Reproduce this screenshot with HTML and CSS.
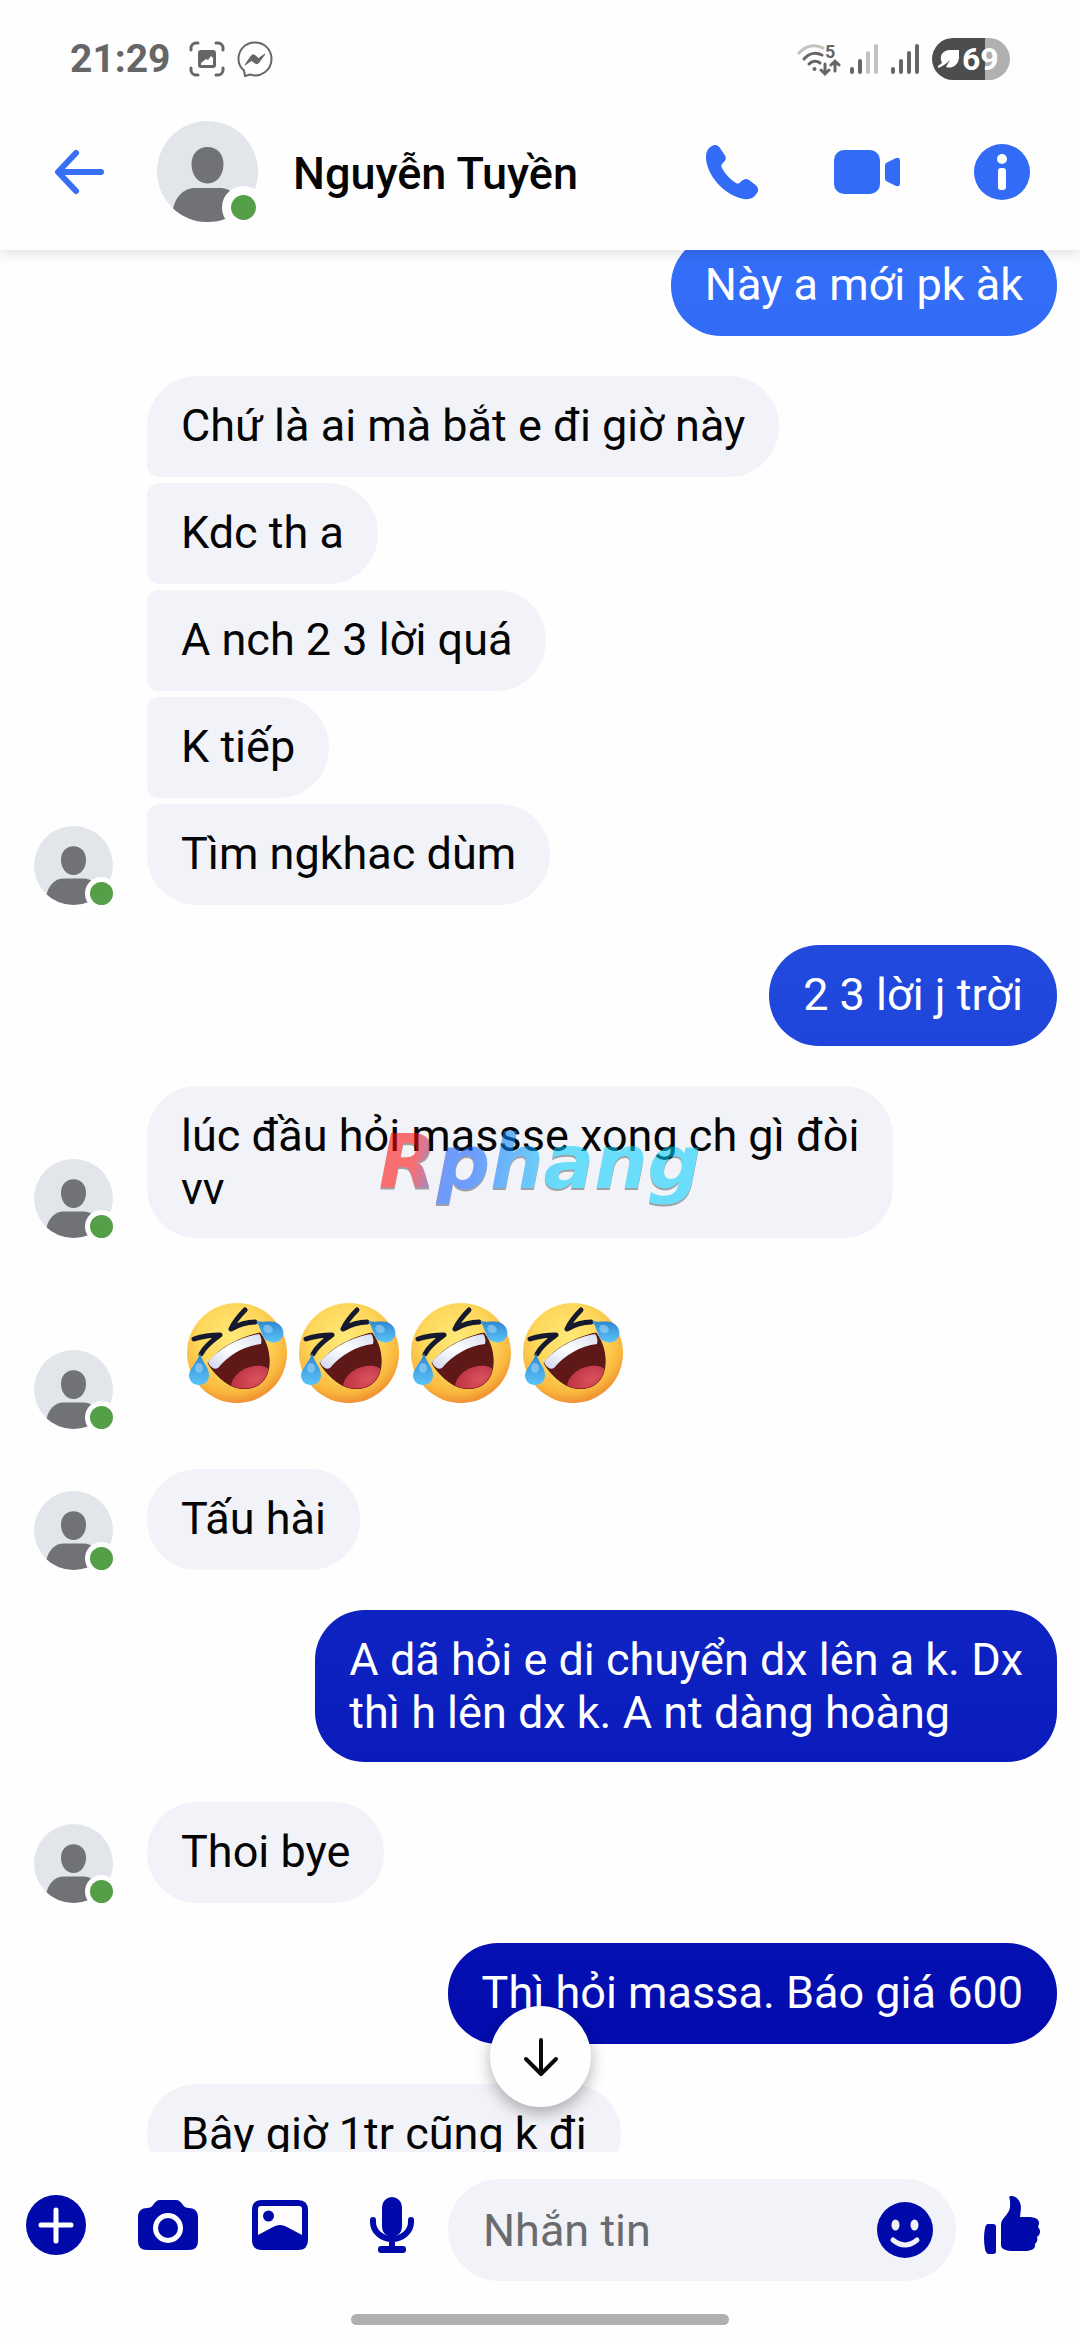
FILE: index.html
```html
<!DOCTYPE html>
<html lang="vi">
<head>
<meta charset="utf-8">
<meta name="viewport" content="width=device-width, initial-scale=1">
<title>Nguyễn Tuyền</title>
<link rel="stylesheet" href="styles.css">
</head>
<body>
<svg class="sprite" aria-hidden="true">
  <defs>
    <radialGradient id="face" cx="45%" cy="35%" r="68%">
      <stop offset="0" stop-color="#ffe97a"/>
      <stop offset="0.5" stop-color="#fdd75a"/>
      <stop offset="0.8" stop-color="#f9b83e"/>
      <stop offset="1" stop-color="#ee862f"/>
    </radialGradient>
    <linearGradient id="tear" x1="0" y1="0" x2="0" y2="1">
      <stop offset="0" stop-color="#2f86cd"/>
      <stop offset="1" stop-color="#5cc3fb"/>
    </linearGradient>
    <linearGradient id="teeth" x1="0" y1="1" x2="1" y2="0">
      <stop offset="0" stop-color="#cdd5ec"/>
      <stop offset="0.5" stop-color="#ffffff"/>
      <stop offset="1" stop-color="#d8def0"/>
    </linearGradient>
    <radialGradient id="tongue" cx="60%" cy="45%" r="60%">
      <stop offset="0" stop-color="#d9525f"/>
      <stop offset="1" stop-color="#bd3040"/>
    </radialGradient>
    <clipPath id="disc"><circle cx="50.500" cy="50.500" r="50.500"/></clipPath>
    <clipPath id="mouth-clip"><path d="M21 60C31 45 54 34 73 30C83 43 85 64 78 75C71 87 54 88 43 82C34 77 26 69 21 60Z"/></clipPath>
  </defs>
  <symbol id="person" viewBox="0 0 101 101">
    <g clip-path="url(#disc)">
      <rect width="101" height="101" fill="#e2e5ea"/>
      <path d="M50.500 26C60 26 66.500 33 66.500 43C66.500 54 60 62.500 50.500 62.500S34.500 54 34.500 43C34.500 33 41 26 50.500 26Z" fill="#717276"/>
      <path d="M38 67H63C75 67 83 77 85 88L85 101H16V88C18 77 26 67 38 67Z" fill="#717276"/>
    </g>
  </symbol>
  <symbol id="rofl" viewBox="0 0 100 100">
    <circle cx="50" cy="50" r="50" fill="url(#face)"/>
    <path d="M21 60C31 45 54 34 73 30C83 43 85 64 78 75C71 87 54 88 43 82C34 77 26 69 21 60Z" fill="#5f1818" stroke="#4a1413" stroke-width="1"/>
    <g clip-path="url(#mouth-clip)">
      <ellipse cx="65" cy="79" rx="22" ry="15" transform="rotate(-24 65 79)" fill="url(#tongue)"/>
    </g>
    <path d="M21 59C32 45 53 34 72 31C74 33 75 37 74 41C57 43 42 52 31 65C27 67 23 64 21 59Z" fill="url(#teeth)"/>
    <path d="M7 36C16 33 24 32 33 32C26 37 18 43 14 51" fill="none" stroke="#15192f" stroke-width="5" stroke-linecap="round" stroke-linejoin="round"/>
    <path d="M58 7C52 13 47 19 44 26C51 22 60 19 68 19" fill="none" stroke="#15192f" stroke-width="5" stroke-linecap="round" stroke-linejoin="round"/>
    <path d="M13 50C15 59 22 64 22 72C22 78 18 82 12 82S2 78 2 72C3 64 11 59 13 50Z" fill="url(#tear)"/>
    <ellipse cx="12" cy="65" rx="4" ry="5" fill="#8fcff6" opacity="0.700"/>
    <path d="M69 18C77 20 84 17 90 20C96 23 98 30 95 35C92 40 84 41 79 37C74 33 74 24 69 18Z" fill="url(#tear)"/>
    <ellipse cx="81" cy="26" rx="5" ry="4" transform="rotate(30 81 26)" fill="#8fcff6" opacity="0.700"/>
  </symbol>
</svg>

<div class="app">
  <header class="top">
    <div class="status">
      <div class="status__side">
        <time class="status__time">21:29</time>
        <svg class="status__notice" viewBox="0 0 36 36" aria-hidden="true">
          <path d="M2 9V7A5 5 0 0 1 7 2H9M27 2H29A5 5 0 0 1 34 7V9M34 27V29A5 5 0 0 1 29 34H27M9 34H7A5 5 0 0 1 2 29V27" fill="none" stroke="#666" stroke-width="3" stroke-linecap="round"/>
          <path fill-rule="evenodd" fill="#666" d="M12 9H24Q27 9 27 12V24Q27 27 24 27H12Q9 27 9 24V12Q9 9 12 9ZM12 24H24V17L22 15L19 19L17 18L12 22Z"/>
        </svg>
        <svg class="status__notice" viewBox="0 0 36 36" aria-hidden="true">
          <path d="M18 1.500C8 1.500 1.500 9 1.500 18C1.500 23 4 27 7 29.500L8 35L13 33.500C24 37 34.500 29 34.500 18C34.500 9 28 1.500 18 1.500Z" fill="none" stroke="#666" stroke-width="2"/>
          <path d="M8 24L14.500 14.500Q16 13 18 14.500L21.500 17.500L28 13L21.500 22Q20 23.500 18 22L14.500 19.500Z" fill="#666" stroke="#666" stroke-linejoin="round"/>
        </svg>
      </div>
      <div class="status__side status__side--end">
        <svg class="status__wifi" viewBox="0 0 44 36" aria-hidden="true">
          <g fill="none" stroke-width="3" stroke-linecap="round">
            <path d="M2 12C9 4 19 3 26 7" stroke="#c2c2c2"/>
            <path d="M7 18C12 12 19 11 25 14M12 23C15 19.500 20 19.500 23 22" stroke="#666"/>
            <path d="M28 23V32M24 29L28 33L32 29M38 30V20M34 24L38 20L42 24" stroke="#666"/>
          </g>
          <circle cx="17.500" cy="28" r="2" fill="#666"/>
          <text x="28" y="17" class="status__band">5</text>
        </svg>
        <svg class="status__signal" viewBox="0 0 28 30" aria-hidden="true">
          <path d="M2 25V28M10 17V28" class="bar"/>
          <path d="M18 9V28M26 2V28" class="bar bar--off"/>
        </svg>
        <svg class="status__signal" viewBox="0 0 28 30" aria-hidden="true">
          <path d="M2 25V28M10 17V28M18 9V28M26 2V28" class="bar"/>
        </svg>
        <span class="battery">
          <svg viewBox="0 0 24 24" aria-hidden="true"><path d="M1 21C4 20 8 18 13 13L9 20C14 22 21 19 22 11V3H12C5 4 2 9 5 16L1 19Z" fill="#fff"/></svg>
          <span>69</span>
        </span>
      </div>
    </div>

    <div class="header">
      <button class="icon-btn icon-btn--back" type="button" aria-label="Quay lại">
        <svg width="50" height="46" viewBox="0 0 50 46"><path d="M47 23H6M22 4L4 23L22 42" fill="none" stroke="#376ff5" stroke-width="6" stroke-linecap="round" stroke-linejoin="round"/></svg>
      </button>
      <span class="avatar avatar--large">
        <svg class="avatar__img"><use href="#person"/></svg>
        <span class="avatar__dot"></span>
      </span>
      <h1 class="header__name">Nguyễn Tuyền</h1>
      <div class="header__actions">
        <button class="icon-btn" type="button" aria-label="Gọi thoại">
          <svg width="54" height="56" viewBox="0 0 54 56"><path d="M8 1.500C11 .5 13 1.500 15 4L20 11.500C22 15 20 17 17.500 19.500C16 21 16 22 17 24C20 30 26 36 31 39C33 40 34 39.500 35 38.500C38 35.500 41 34 44 36L50 40.500C53.500 43.500 54 46 52 49C49 54 45 56 39 55C20 52 1 31 1 13C1 7 4 3 8 1.500Z" fill="#326bf6"/></svg>
        </button>
        <button class="icon-btn" type="button" aria-label="Gọi video">
          <svg width="66" height="44" viewBox="0 0 66 44"><rect width="46" height="44" rx="10" fill="#326bf6"/><path d="M52 13Q51 14 51 16V28Q51 30 52 31L62 36Q66 37 66 33V11Q66 7 62 8Z" fill="#326bf6"/></svg>
        </button>
        <button class="icon-btn" type="button" aria-label="Thông tin">
          <svg width="56" height="56" viewBox="0 0 56 56"><circle cx="28" cy="28" r="28" fill="#326bf6"/><circle cx="28" cy="15" r="5" fill="#fff"/><rect x="24" y="24" width="8" height="22" rx="3" fill="#fff"/></svg>
        </button>
      </div>
    </div>
  </header>

  <main class="feed">
    <div class="thread">
      <div class="sent"><p class="bubble bubble--sent">Này a mới pk àk</p></div>
      <div class="received">
        <span class="avatar"><svg class="avatar__img"><use href="#person"/></svg><span class="avatar__dot"></span></span>
        <div class="received__group">
          <p class="bubble">Chứ là ai mà bắt e đi giờ này</p>
          <p class="bubble">Kdc th a</p>
          <p class="bubble">A nch 2 3 lời quá</p>
          <p class="bubble">K tiếp</p>
          <p class="bubble">Tìm ngkhac dùm</p>
        </div>
      </div>
      <div class="sent"><p class="bubble bubble--sent">2 3 lời j trời</p></div>
      <div class="received">
        <span class="avatar"><svg class="avatar__img"><use href="#person"/></svg><span class="avatar__dot"></span></span>
        <div class="received__group"><p class="bubble bubble--lines">lúc đầu hỏi massse xong ch gì đòi<br>vv</p></div>
      </div>
      <div class="received">
        <span class="avatar"><svg class="avatar__img"><use href="#person"/></svg><span class="avatar__dot"></span></span>
        <div class="emojis" role="img" aria-label="🤣🤣🤣🤣">
          <svg><use href="#rofl"/></svg>
          <svg><use href="#rofl"/></svg>
          <svg><use href="#rofl"/></svg>
          <svg><use href="#rofl"/></svg>
        </div>
      </div>
      <div class="received">
        <span class="avatar"><svg class="avatar__img"><use href="#person"/></svg><span class="avatar__dot"></span></span>
        <div class="received__group"><p class="bubble">Tấu hài</p></div>
      </div>
      <div class="sent"><p class="bubble bubble--sent bubble--lines">A dã hỏi e di chuyển dx lên a k. Dx<br>thì h lên dx k. A nt dàng hoàng</p></div>
      <div class="received">
        <span class="avatar"><svg class="avatar__img"><use href="#person"/></svg><span class="avatar__dot"></span></span>
        <div class="received__group"><p class="bubble">Thoi bye</p></div>
      </div>
      <div class="sent"><p class="bubble bubble--sent">Thì hỏi massa. Báo giá 600</p></div>
      <div class="received">
        <span class="avatar"></span>
        <div class="received__group"><p class="bubble">Bây giờ 1tr cũng k đi</p></div>
      </div>
    </div>
    <button class="jump" type="button" aria-label="Xuống cuối">
      <svg width="36" height="40" viewBox="0 0 36 40"><path d="M18 3V36M3 22L18 37L33 22" fill="none" stroke="#0a0a0a" stroke-width="4" stroke-linecap="round" stroke-linejoin="round"/></svg>
    </button>
  </main>

  <footer class="bottom">
    <form class="composer">
      <div class="composer__tools">
        <button class="icon-btn" type="button" aria-label="Thêm">
          <svg width="60" height="60" viewBox="0 0 60 60"><circle cx="30" cy="30" r="30" fill="#0009a9"/><path d="M30 15V46M15 30H45" stroke="#fff" stroke-width="5" stroke-linecap="round"/></svg>
        </button>
        <button class="icon-btn" type="button" aria-label="Máy ảnh">
          <svg width="60" height="50" viewBox="0 0 60 50"><path d="M22 0H38C41 0 43 2 45 5C46 7 48 8 51 8C56 8 60 11 60 17V41Q60 50 51 50H9Q0 50 0 41V17C0 11 4 8 9 8C12 8 14 7 15 5C17 2 19 0 22 0Z" fill="#0009a9"/><circle cx="30" cy="28" r="12.500" fill="#0009a9" stroke="#fff" stroke-width="5"/></svg>
        </button>
        <button class="icon-btn" type="button" aria-label="Ảnh">
          <svg width="56" height="50" viewBox="0 0 56 50"><path fill-rule="evenodd" fill="#0009a9" d="M10 0H46Q56 0 56 10V40Q56 50 46 50H10Q0 50 0 40V10Q0 0 10 0ZM9 6Q6 6 6 9V35L21 27Q28 23 35 27L50 35V9Q50 6 47 6Z"/><circle cx="16.500" cy="16" r="5.500" fill="#0009a9"/></svg>
        </button>
        <button class="icon-btn" type="button" aria-label="Ghi âm">
          <svg width="44" height="56" viewBox="0 0 44 56"><rect x="12" width="20" height="40" rx="10" fill="#0009a9"/><path d="M3 23V25A19 17 0 0 0 41 25V23M22 42V50" fill="none" stroke="#0009a9" stroke-width="6" stroke-linecap="round"/><rect x="8" y="49" width="28" height="7" rx="3" fill="#0009a9"/></svg>
        </button>
      </div>
      <div class="field">
        <input class="field__input" type="text" placeholder="Nhắn tin" aria-label="Nhắn tin">
        <button class="icon-btn icon-btn--field" type="button" aria-label="Biểu tượng cảm xúc">
          <svg width="56" height="56" viewBox="0 0 56 56"><circle cx="28" cy="28" r="28" fill="#0009a9"/><ellipse cx="18.500" cy="23" rx="4" ry="5.500" fill="#f2f3f8"/><ellipse cx="37.500" cy="23" rx="4" ry="5.500" fill="#f2f3f8"/><path d="M16 38Q28 48 40 38" fill="none" stroke="#f2f3f8" stroke-width="5" stroke-linecap="round"/></svg>
        </button>
      </div>
      <button class="icon-btn" type="button" aria-label="Thích">
        <svg width="56" height="58" viewBox="0 0 56 58"><path d="M4 28H9Q12 28 12 31V55Q12 58 9 58H5Q2 58 1 53Q-1 42 1 32Q2 28 4 28Z" fill="#0009a9"/><path d="M27 0C33 0 37 5 37 12L36 21H44C51 21 55 23 55 27C55 29 54 30 54 31C57 34 57 38 53 41C54 44 53 46 51 48C52 53 47 55 40 55H30C22 55 17 53 17 49V29C17 24 20 22 23 18C27 13 26 9 26 4C25 2 25 0 27 0Z" fill="#0009a9"/></svg>
      </button>
    </form>
    <div class="home-bar"></div>
  </footer>

  <div class="watermark" aria-hidden="true"><span class="watermark__text">Rphang</span></div>
</div>
</body>
</html>
```
FILE: styles.css
```css
* {
  box-sizing: border-box;
}

body {
  margin: 0;
  background: #fefefe;
  color: #050505;
  font-family: Roboto, "Noto Sans", sans-serif;
  font-size: 45px;
  line-height: 53px;
}

.sprite {
  position: absolute;
  width: 0;
  height: 0;
}

.app {
  position: relative;
  display: flex;
  flex-direction: column;
  height: 100vh;
}

/* Top: system status and conversation header */

.top {
  position: relative;
  z-index: 1;
  flex: none;
  background: #fefefe;
  box-shadow: 0 2px 14px rgba(0, 0, 0, 0.14);
}

.status {
  display: flex;
  justify-content: space-between;
  padding: 38px 70px 0;
}

.status__side {
  display: flex;
  align-items: center;
  gap: 12px;
  height: 42px;
}

.status__side--end {
  gap: 13px;
}

.status__time {
  margin-right: 6px;
  color: #666;
  font-size: 39px;
  font-weight: 700;
}

.status__notice {
  width: 36px;
  height: 36px;
}

.status__wifi {
  width: 44px;
  height: 36px;
  margin-right: -4px;
}

.status__band {
  fill: #666;
  font-size: 18px;
  font-weight: 700;
}

.status__signal {
  width: 28px;
  height: 30px;
}

.bar {
  fill: none;
  stroke: #666;
  stroke-width: 4;
  stroke-linecap: round;
}

.bar--off {
  stroke: #c2c2c2;
}

.battery {
  display: flex;
  align-items: center;
  gap: 1px;
  width: 78px;
  height: 42px;
  padding-left: 5px;
  border-radius: 21px;
  background: linear-gradient(90deg, #4d4d4d 68%, #b0b0b0 68%);
  color: #fff;
  font-size: 32px;
  font-weight: 700;
}

.battery svg {
  width: 24px;
  height: 24px;
}

.header {
  display: flex;
  align-items: center;
  padding: 41px 45px 28px 54px;
}

.header__name {
  margin: 0 0 0 35px;
  padding-top: 3px;
  font-size: 45px;
  font-weight: 500;
  white-space: nowrap;
}

.header__actions {
  display: flex;
  gap: 69px;
  margin-left: auto;
}

.icon-btn {
  display: flex;
  flex: none;
  align-items: center;
  justify-content: center;
  width: 66px;
  padding: 0;
  border: 0;
  background: none;
}

.icon-btn--back {
  width: 50px;
  margin-right: 53px;
}

/* Avatars */

.avatar {
  position: relative;
  flex: none;
  width: 79px;
  height: 79px;
}

.avatar__img {
  display: block;
  width: 100%;
  height: 100%;
}

.avatar__dot {
  position: absolute;
  right: -5px;
  bottom: -5px;
  width: 33px;
  height: 33px;
  border: 5px solid #fefefe;
  border-radius: 50%;
  background: #569f49;
}

.avatar--large {
  width: 101px;
  height: 101px;
}

.avatar--large .avatar__dot {
  right: -7px;
  bottom: -7px;
  width: 43px;
  height: 43px;
  border-width: 9px;
}

/* Conversation */

.feed {
  position: relative;
  flex: 1;
  min-height: 0;
  overflow: hidden;
}

.thread {
  display: flex;
  flex-direction: column;
  gap: 40px;
  margin-top: -15px;
  padding: 0 23px 0 34px;
}

.sent {
  display: flex;
  justify-content: flex-end;
}

.received {
  display: flex;
  align-items: flex-end;
  gap: 34px;
}

.received__group {
  display: flex;
  flex-direction: column;
  align-items: flex-start;
  gap: 6px;
}

.bubble {
  margin: 0;
  padding: 23px 34px 25px;
  border-radius: 50px;
  background: #f2f3f8;
}

.bubble--lines {
  padding-bottom: 23px;
}

.received__group .bubble:not(:last-child) {
  border-bottom-left-radius: 12px;
}

.received__group .bubble:not(:first-child) {
  border-top-left-radius: 12px;
}

.bubble--sent {
  background: linear-gradient(#336ef8 12%, #2148dc 42%, #0c20bf 72%, #020aad 88%) fixed;
  color: #fff;
}

.emojis {
  display: flex;
  gap: 12px;
  padding: 25px 40px 26px;
}

.received .emojis {
  margin-left: 0;
}

.emojis svg {
  width: 100px;
  height: 100px;
}

.jump {
  position: absolute;
  bottom: 45px;
  left: 50%;
  display: flex;
  align-items: center;
  justify-content: center;
  width: 101px;
  height: 101px;
  margin-left: -50px;
  padding: 0;
  border: 0;
  border-radius: 50%;
  background: #fefefe;
  box-shadow: 0 6px 16px rgba(0, 0, 0, 0.3);
}

/* Composer */

.bottom {
  flex: none;
  padding: 27px 0 15px;
}

.composer {
  display: flex;
  align-items: center;
  gap: 26px;
  padding: 0 38px 0 26px;
}

.composer .icon-btn {
  width: 60px;
  padding-bottom: 10px;
}

.composer .icon-btn--field {
  padding: 0;
}

.composer__tools {
  display: flex;
  align-items: center;
  gap: 52px;
}

.field {
  display: flex;
  flex: 1;
  align-items: center;
  min-width: 0;
  height: 102px;
  padding: 0 21px 0 35px;
  border-radius: 51px;
  background: #f2f3f8;
}

.field__input {
  flex: 1;
  min-width: 0;
  padding: 0;
  border: 0;
  outline: 0;
  background: none;
  color: #050505;
  font: inherit;
}

.field__input::placeholder {
  color: #6a6b6f;
  opacity: 1;
}

.home-bar {
  width: 35%;
  height: 11px;
  margin: 33px auto 0;
  border-radius: 6px;
  background: #b0b0b0;
}

/* Site mark laid over the middle of the screen */

.watermark {
  position: absolute;
  inset: 0;
  z-index: 2;
  display: grid;
  place-items: center;
  opacity: 0.56;
  pointer-events: none;
}

.watermark__text {
  padding: 0 8px 16px;
  background: linear-gradient(100deg, #ff0708 14%, #0759ff 24%, #0759ff 30%, #00cdfa 56%);
  background-clip: text;
  -webkit-background-clip: text;
  color: transparent;
  filter: drop-shadow(0 2px 0 rgba(0, 0, 0, 0.6));
  font-family: "DejaVu Sans", sans-serif;
  font-size: 75px;
  font-style: italic;
  font-weight: 700;
  line-height: 90px;
}
```
